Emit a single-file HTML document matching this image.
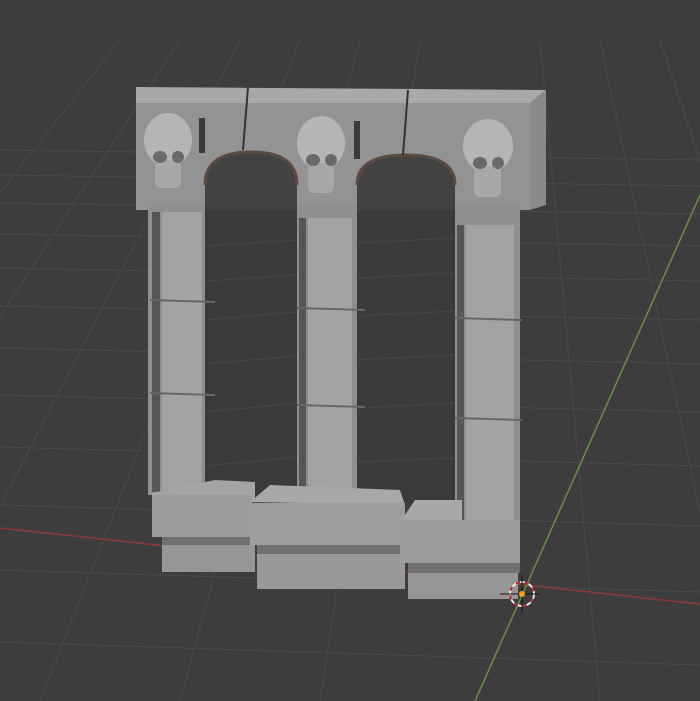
<!DOCTYPE html>
<html><head><style>html,body{margin:0;padding:0;background:#3d3d3d;width:700px;height:701px;overflow:hidden}</style></head>
<body>
<svg width="700" height="701" viewBox="0 0 700 701" xmlns="http://www.w3.org/2000/svg">
<rect width="700" height="701" fill="#3d3d3d"/>
<g stroke="#4a4a4a" stroke-width="1" fill="none">
<path d="M0 150 L700 160 M0 175 L700 186 M0 203 L700 214 M0 234 L700 246 M0 268 L700 281 M0 306 L700 320 M0 348 L700 364 M0 395 L700 412 M0 447 L700 466 M0 505 L700 526 M0 570 L700 592 M0 642 L700 665"/>
<path d="M-400 701 L120 40 M-250 701 L180 40 M-100 701 L240 40 M40 701 L300 40 M180 701 L360 40 M320 701 L420 40 M600 701 L540 40 M740 701 L600 40 M880 701 L660 40 M1020 701 L720 40"/>
</g>
<line x1="0" y1="528" x2="700" y2="604" stroke="#8a3a3a" stroke-width="1.5"/>
<line x1="475" y1="701" x2="700" y2="195" stroke="#6a8f3a" stroke-width="1.5"/>
<polygon points="136,87 546,90 530,103 136,103" fill="#a9a9a9"/>
<polygon points="530,103 546,90 546,205 530,210" fill="#8a8a8a"/>
<rect x="136" y="103" width="394" height="107" fill="#939393"/>
<path d="M205 490 L205 185 Q205 152 251 152 Q297 152 297 185 L297 490 Z" fill="#3a3a3a" fill-opacity="0.9"/>
<path d="M357 500 L357 185 Q357 155 406 155 Q455 155 455 185 L455 505 Z" fill="#3a3a3a" fill-opacity="0.9"/>
<g stroke="#464646" stroke-width="1" fill="none">
<path d="M205 246 L297 240 M205 281 L297 275 M205 320 L297 312 M205 364 L297 356 M205 412 L297 403 M205 466 L297 457 M357 243 L455 238 M357 278 L455 273 M357 316 L455 311 M357 360 L455 355 M357 408 L455 403 M357 462 L455 458"/>
</g>
<path d="M205 185 Q205 152 251 152 Q297 152 297 185" stroke="#5a4a42" stroke-width="3" fill="none"/>
<path d="M357 185 Q357 155 406 155 Q455 155 455 185" stroke="#5a4a42" stroke-width="3" fill="none"/>
<rect x="148" y="205" width="57" height="290" fill="#8f8f8f"/>
<rect x="162" y="212" width="40" height="280" fill="#a2a2a2"/>
<rect x="152" y="212" width="8" height="280" fill="#555"/>
<rect x="297" y="205" width="60" height="310" fill="#8f8f8f"/>
<rect x="308" y="218" width="44" height="295" fill="#a2a2a2"/>
<rect x="299" y="218" width="7" height="295" fill="#555"/>
<rect x="455" y="205" width="65" height="325" fill="#8f8f8f"/>
<rect x="466" y="225" width="48" height="302" fill="#a2a2a2"/>
<rect x="457" y="225" width="7" height="300" fill="#555"/>
<g stroke="#666" stroke-width="2">
<line x1="150" y1="300" x2="215" y2="302"/><line x1="150" y1="393" x2="215" y2="395"/>
<line x1="297" y1="308" x2="365" y2="310"/><line x1="297" y1="405" x2="365" y2="407"/>
<line x1="455" y1="318" x2="522" y2="320"/><line x1="455" y1="418" x2="522" y2="420"/>
</g>
<rect x="199" y="118" width="6" height="35" fill="#3a3a3a"/>
<rect x="354" y="121" width="6" height="38" fill="#3a3a3a"/>
<line x1="248" y1="87" x2="243" y2="150" stroke="#333" stroke-width="2"/>
<line x1="408" y1="90" x2="403" y2="155" stroke="#333" stroke-width="2"/>
<g>
<ellipse cx="168" cy="140" rx="24" ry="27" fill="#b5b5b5"/><rect x="155" y="160" width="26" height="28" rx="6" fill="#a8a8a8"/>
<ellipse cx="160" cy="157" rx="7" ry="6" fill="#6a6a6a"/><ellipse cx="178" cy="157" rx="6" ry="6" fill="#6a6a6a"/>
<ellipse cx="321" cy="143" rx="24" ry="27" fill="#b5b5b5"/><rect x="308" y="163" width="26" height="30" rx="6" fill="#a8a8a8"/>
<ellipse cx="313" cy="160" rx="7" ry="6" fill="#6a6a6a"/><ellipse cx="331" cy="160" rx="6" ry="6" fill="#6a6a6a"/>
<ellipse cx="488" cy="146" rx="25" ry="27" fill="#b5b5b5"/><rect x="474" y="166" width="27" height="31" rx="6" fill="#a8a8a8"/>
<ellipse cx="480" cy="163" rx="7" ry="6" fill="#6a6a6a"/><ellipse cx="498" cy="163" rx="6" ry="6" fill="#6a6a6a"/>
</g>
<polygon points="152,493 215,480 255,482 255,500 152,500" fill="#a5a5a5"/>
<rect x="152" y="495" width="100" height="42" fill="#9c9c9c"/>
<rect x="162" y="537" width="93" height="8" fill="#707070"/>
<rect x="162" y="545" width="93" height="27" fill="#969696"/>
<polygon points="250,502 270,485 400,490 405,505" fill="#a8a8a8"/>
<rect x="250" y="503" width="155" height="42" fill="#9e9e9e"/>
<rect x="257" y="545" width="148" height="9" fill="#707070"/>
<rect x="257" y="554" width="148" height="35" fill="#989898"/>
<polygon points="400,522 415,500 462,500 462,522" fill="#a8a8a8"/>
<rect x="400" y="520" width="120" height="43" fill="#9c9c9c"/>
<rect x="408" y="563" width="112" height="10" fill="#707070"/>
<rect x="408" y="573" width="110" height="26" fill="#969696"/>
<circle cx="522" cy="594" r="12" fill="none" stroke="#e8e8e8" stroke-width="2" stroke-dasharray="5 4"/>
<circle cx="522" cy="594" r="12" fill="none" stroke="#c03030" stroke-width="2" stroke-dasharray="4 5" stroke-dashoffset="4"/>
<line x1="522" y1="575" x2="522" y2="612" stroke="#111" stroke-width="1"/>
<line x1="500" y1="594" x2="540" y2="594" stroke="#111" stroke-width="1"/>
<circle cx="522" cy="594" r="3" fill="#f0a020"/>
</svg>
</body></html>
